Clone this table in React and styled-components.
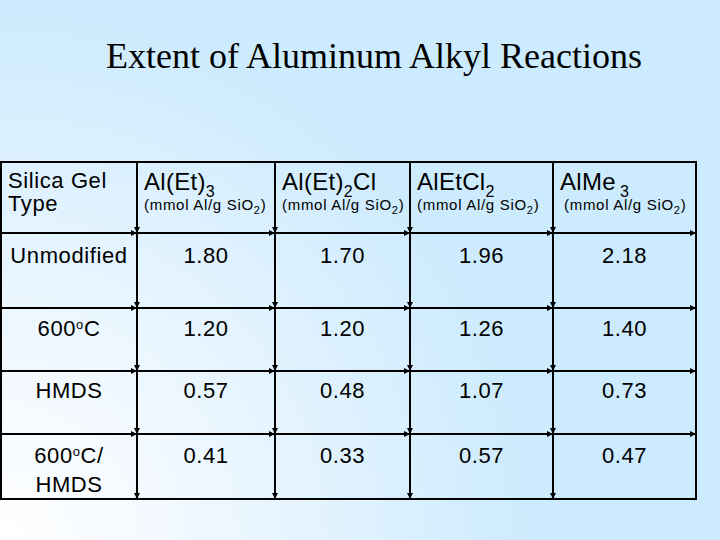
import React from 'react';
import styled, { createGlobalStyle, css } from 'styled-components';

const GlobalStyle = createGlobalStyle`
  html, body {
    margin: 0;
    padding: 0;
  }
  body {
    font-family: "Liberation Sans", Arial, sans-serif;
    color: #000;
  }
`;

const Slide = styled.div`
  width: 720px;
  height: 540px;
  overflow: hidden;
  background: radial-gradient(circle at 0% 100%, #ffffff 0px, #f2f9ff 170px, #cdebfe 530px);
`;

const Title = styled.h1`
  margin: 0;
  padding: 36px 0 0 28px;
  font-family: "Liberation Serif", "Times New Roman", serif;
  font-weight: normal;
  font-size: 36px;
  line-height: 40px;
  text-align: center;
`;

const Table = styled.div`
  margin-top: 85px;
  display: grid;
  grid-template-columns: 136px 138px 135px 143px 143px;
  grid-template-rows: 71px 75px 63px 63px 65px;
  width: 695px;
  border-top: 2px solid #000;
  border-left: 2px solid #000;
`;

const downArrow = css`
  &::after {
    content: '';
    position: absolute;
    right: -4px;
    bottom: -1px;
    width: 0;
    height: 0;
    border-left: 3px solid transparent;
    border-right: 3px solid transparent;
    border-top: 6px solid #000;
  }
`;

const rightArrow = css`
  &::before {
    content: '';
    position: absolute;
    right: -1px;
    bottom: -4px;
    width: 0;
    height: 0;
    border-top: 3px solid transparent;
    border-bottom: 3px solid transparent;
    border-left: 6px solid #000;
  }
`;

const Cell = styled.div`
  position: relative;
  box-sizing: border-box;
  border-right: 2px solid #000;
  border-bottom: 2px solid #000;
  padding: ${p => p.$padTop}px 4px 0 ${p => (p.$left ? 6 : 4)}px;
  font-size: 22px;
  line-height: 29px;
  letter-spacing: 0.6px;
  text-align: ${p => (p.$left ? 'left' : 'center')};
  ${p => p.$down && downArrow}
  ${p => p.$right && rightArrow}
`;

const HeadLabel = styled.div`
  font-size: 22px;
  line-height: 23px;
  letter-spacing: 0.6px;
`;

const Chem = styled.div`
  margin-top: 4px;
  font-size: 24px;
  line-height: 17px;
  letter-spacing: 0.3px;

  sub {
    font-size: 16px;
    line-height: 0;
    vertical-align: -7px;
    margin-left: ${p => p.$subGap || 0}px;
  }
`;

const Unit = styled.div`
  margin-top: 6px;
  margin-left: ${p => p.$indent || 0}px;
  font-size: 15px;
  line-height: 14px;
  letter-spacing: 0.7px;

  sub {
    font-size: 11px;
    line-height: 0;
    vertical-align: -4px;
  }
`;

const Deg = styled.sup`
  font-size: 13px;
  line-height: 0;
  vertical-align: 7px;
`;

const headers = [
  { name: <>Al(Et)<sub>3</sub></> },
  { name: <>Al(Et)<sub>2</sub>Cl</> },
  { name: <>AlEtCl<sub>2</sub></> },
  { name: <>AlMe<sub>3</sub></>, subGap: 4, unitIndent: 4 },
];

const rows = [
  { label: 'Unmodified', values: ['1.80', '1.70', '1.96', '2.18'], pad: 7 },
  { label: <>600<Deg>o</Deg>C</>, values: ['1.20', '1.20', '1.26', '1.40'], pad: 5 },
  { label: 'HMDS', values: ['0.57', '0.48', '1.07', '0.73'], pad: 4 },
  { label: <>600<Deg>o</Deg>C/<br />HMDS</>, values: ['0.41', '0.33', '0.57', '0.47'], pad: 6 },
];

export default function App() {
  const lastRow = rows.length;
  const lastCol = headers.length;

  return (
    <>
      <GlobalStyle />
      <Slide>
        <Title>Extent of Aluminum Alkyl Reactions</Title>
        <Table>
          <Cell $left $padTop={6} $down $right>
            <HeadLabel>Silica Gel<br />Type</HeadLabel>
          </Cell>
          {headers.map((h, i) => (
            <Cell key={i} $left $padTop={6} $down={i + 1 < lastCol} $right>
              <Chem $subGap={h.subGap}>{h.name}</Chem>
              <Unit $indent={h.unitIndent}>(mmol Al/g SiO<sub>2</sub>)</Unit>
            </Cell>
          ))}
          {rows.map((r, ri) => (
            <React.Fragment key={ri}>
              <Cell $padTop={r.pad} $down $right={ri + 1 < lastRow}>
                {r.label}
              </Cell>
              {r.values.map((v, ci) => (
                <Cell
                  key={ci}
                  $padTop={r.pad}
                  $down={ci + 1 < lastCol}
                  $right={ri + 1 < lastRow}
                >
                  {v}
                </Cell>
              ))}
            </React.Fragment>
          ))}
        </Table>
      </Slide>
    </>
  );
}
